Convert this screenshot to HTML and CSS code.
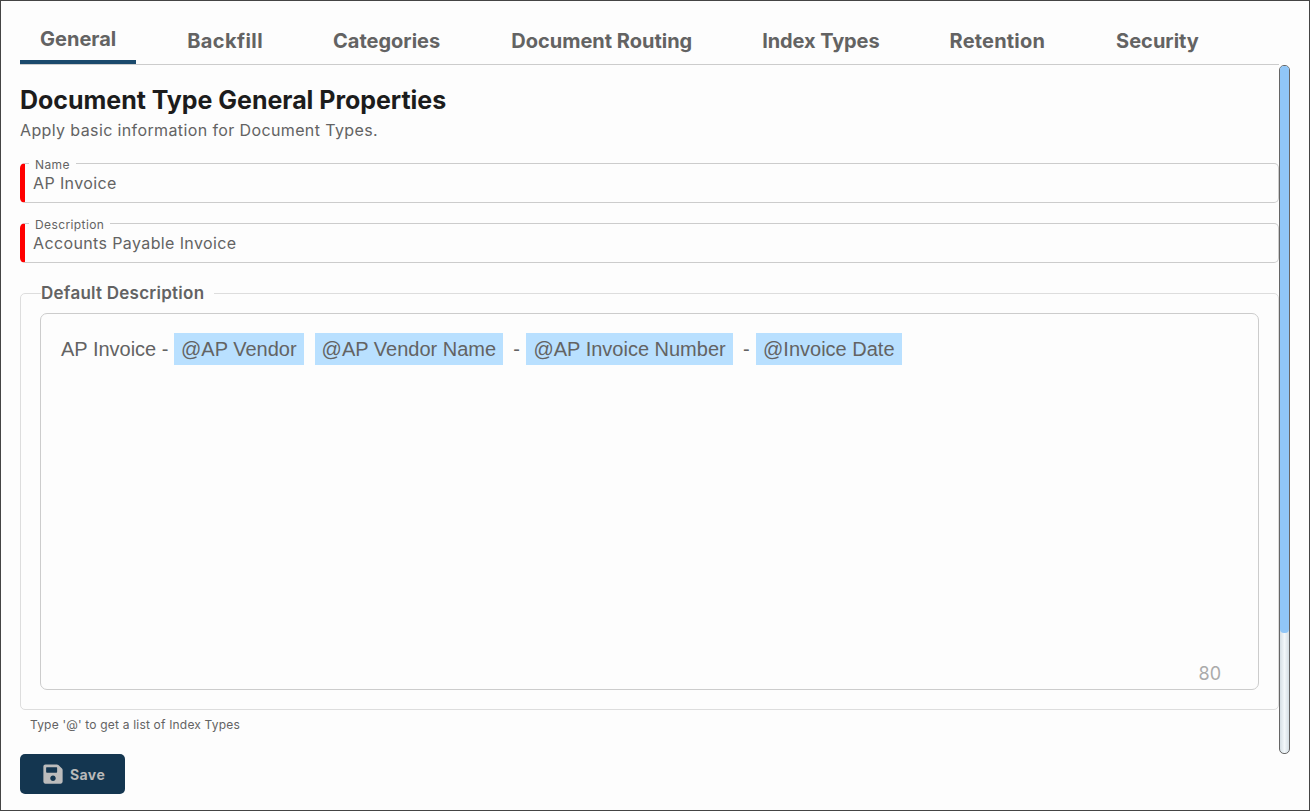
FILE: index.html
```html
<!DOCTYPE html>
<html lang="en">
<head>
<meta charset="utf-8">
<title>Document Type General Properties</title>
<link rel="stylesheet" href="styles.css">
</head>
<body>
<div class="window">
  <nav class="tabs">
    <a class="tab active">General</a>
    <a class="tab">Backfill</a>
    <a class="tab">Categories</a>
    <a class="tab">Document Routing</a>
    <a class="tab">Index Types</a>
    <a class="tab">Retention</a>
    <a class="tab">Security</a>
  </nav>
  <div class="body">
    <main class="content">
      <h1 class="title">Document Type General Properties</h1>
      <p class="subtitle">Apply basic information for Document Types.</p>
      <fieldset class="field">
        <legend class="field-label">Name</legend>
        <div class="field-value">AP Invoice</div>
      </fieldset>
      <fieldset class="field">
        <legend class="field-label">Description</legend>
        <div class="field-value">Accounts Payable Invoice</div>
      </fieldset>
      <fieldset class="group">
        <legend class="group-label">Default Description</legend>
        <div class="editor">
          <div class="editor-text">AP Invoice - <span class="mention">@AP Vendor</span><span class="sep"></span><span class="mention">@AP Vendor Name</span><span class="dash">-</span><span class="mention">@AP Invoice Number</span><span class="dash">-</span><span class="mention">@Invoice Date</span></div>
          <span class="counter">80</span>
        </div>
      </fieldset>
      <p class="hint">Type '@' to get a list of Index Types</p>
    </main>
    <div class="scrollbar"><div class="thumb"></div></div>
  </div>
  <div class="footer">
    <button class="save" type="button">
      <svg class="save-icon" viewBox="0 0 448 512" aria-hidden="true"><path d="M433.941 129.941l-83.882-83.882A48 48 0 0 0 316.118 32H48C21.49 32 0 53.49 0 80v352c0 26.51 21.49 48 48 48h352c26.51 0 48-21.49 48-48V163.882a48 48 0 0 0-14.059-33.941zM224 416c-35.346 0-64-28.654-64-64 0-35.346 28.654-64 64-64s64 28.654 64 64c0 35.346-28.654 64-64 64zm96-304.52V212c0 6.627-5.373 12-12 12H76c-6.627 0-12-5.373-12-12V108c0-6.627 5.373-12 12-12h228.52c3.183 0 6.235 1.264 8.485 3.515l3.48 3.48A11.996 11.996 0 0 1 320 111.48z"/></svg>
      Save
    </button>
  </div>
</div>
</body>
</html>
```

FILE: styles.css
```css
* { box-sizing: border-box; }
html, body { margin: 0; height: 100%; }
body { font-family: Inter, "Liberation Sans", sans-serif; color: #636363; background: #fdfdfd; }
.window { width: 1310px; height: 811px; border: 1px solid #444; display: flex; flex-direction: column; padding: 0 19px; overflow: hidden; }
.tabs { display: flex; gap: 31px; height: 64px; border-bottom: 1px solid #ccc; margin-right: 11px; flex: none; }
.tab { padding: 0 20px; font-size: 20px; font-weight: 700; line-height: 24px; padding-top: 28px; height: 63px; color: #636363; }
.tab.active { padding-top: 26px; border-bottom: 4px solid #1b4a6d; }
.tab:nth-child(2) { letter-spacing: .4px; }
.tab:nth-child(3) { margin-left: -1px; }
.tab:nth-child(5) { margin-left: -1px; letter-spacing: -.1px; }
.tab:nth-child(6) { margin-left: -1px; letter-spacing: .2px; }
.body { display: flex; height: 689px; flex: none; }
.content { width: 1259px; flex: none; }
.scrollbar { width: 11px; flex: none; height: 689px; border: 1px solid #666; border-radius: 5px; background: linear-gradient(90deg, #d5dfe5, #f2f7fa 50%, #d5dfe5); overflow: hidden; }
.thumb { height: 567px; background: #90c6f7; border-radius: 0 0 4px 4px; }
.title { margin: 21px 0 0; font-size: 25px; line-height: 28px; font-weight: 700; color: #1c1c1c; letter-spacing: -.03px; }
.subtitle { margin: 6px 0 0; font-size: 16px; line-height: 20px; letter-spacing: .38px; }
.field { margin: 0 0 11px; padding: 0 0 0 8px; height: 49px; min-width: 0; border: 1px solid #ccc; border-left: 5px solid #f00; border-radius: 5px; }
.subtitle + .field { margin-top: 14px; }
.field-label { margin-left: -4px; padding: 4px 6px 0; font-size: 12px; line-height: 14px; letter-spacing: .4px; }
.field-value { font-size: 16px; line-height: 20px; margin-top: 1px; letter-spacing: .38px; }
.group { margin: 20px 0 0; padding: 0 19px; height: 427px; min-width: 0; border: 1px solid #ddd; border-radius: 5px; }
.group-label { margin-left: 1px; padding: 0 10px 0 0; font-size: 17px; font-weight: 600; line-height: 20px; letter-spacing: .25px; }
.editor { position: relative; margin-top: 10px; height: 377px; border: 1px solid #ccc; border-radius: 7px; padding: 19px 20px; }
.editor-text { font-family: "Liberation Sans", Arial, sans-serif; font-size: 20px; line-height: 32px; white-space: nowrap; }
.mention { display: inline-block; padding: 0 7px; background: #b9e0ff; }
.sep { display: inline-block; width: 11px; }
.dash { display: inline-block; padding: 0 6.5px 0 10.2px; }
.counter { position: absolute; right: 37px; bottom: 4px; font-size: 18px; line-height: 22px; color: #aaa; }
.hint { margin: 7px 0 0 10px; font-size: 12px; line-height: 15px; letter-spacing: .19px; }
.footer { flex: none; }
.save { display: flex; align-items: center; gap: 7px; width: 105px; height: 40px; padding: 0 0 0 23px; border: 0; border-radius: 5px; background: #143650; color: #b9b9b9; font-family: inherit; font-size: 14px; font-weight: 700; letter-spacing: .4px; }
.save-icon { width: 20px; height: 22px; fill: #bcbcbc; }
```
